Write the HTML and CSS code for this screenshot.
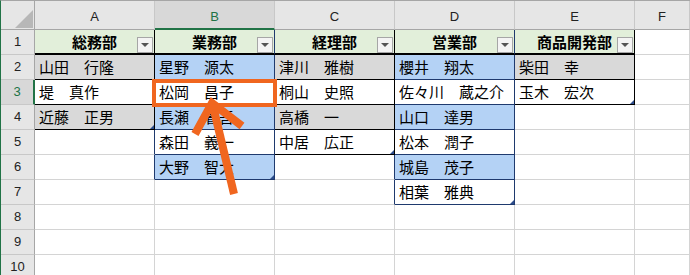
FILE: index.html
```html
<!DOCTYPE html>
<html>
<head>
    <title>Sheet</title>
    <link rel="stylesheet" href="styles.css">
</head>
<body>
    <div class="sheet">
        <div class="corner"><span class="corner-mark"></span></div>
        <div class="col-head">A</div>
        <div class="col-head selected">B</div>
        <div class="col-head">C</div>
        <div class="col-head">D</div>
        <div class="col-head">E</div>
        <div class="col-head">F</div>

        <div class="row-head">1</div>
        <div class="cell head t-black">総務部<span class="filter"></span></div>
        <div class="cell head t-navy">業務部<span class="filter"></span></div>
        <div class="cell head t-black">経理部<span class="filter"></span></div>
        <div class="cell head t-navy">営業部<span class="filter"></span></div>
        <div class="cell head t-black">商品開発部<span class="filter"></span></div>
        <div class="cell"></div>

        <div class="row-head">2</div>
        <div class="cell t-black gray">山田　行隆</div>
        <div class="cell t-navy blue">星野　源太</div>
        <div class="cell t-black gray">津川　雅樹</div>
        <div class="cell t-navy blue">櫻井　翔太</div>
        <div class="cell t-black gray">柴田　幸</div>
        <div class="cell"></div>

        <div class="row-head selected">3</div>
        <div class="cell t-black">堤　真作</div>
        <div class="cell t-navy">松岡　昌子</div>
        <div class="cell t-black">桐山　史照</div>
        <div class="cell t-navy">佐々川　蔵之介</div>
        <div class="cell t-black end">玉木　宏次</div>
        <div class="cell"></div>

        <div class="row-head">4</div>
        <div class="cell t-black gray end">近藤　正男</div>
        <div class="cell t-navy blue">長瀬　省吾</div>
        <div class="cell t-black gray">高橋　一</div>
        <div class="cell t-navy blue">山口　達男</div>
        <div class="cell"></div>
        <div class="cell"></div>

        <div class="row-head">5</div>
        <div class="cell edge-navy"></div>
        <div class="cell t-navy">森田　義一</div>
        <div class="cell t-black end">中居　広正</div>
        <div class="cell t-navy">松本　潤子</div>
        <div class="cell"></div>
        <div class="cell"></div>

        <div class="row-head">6</div>
        <div class="cell edge-navy"></div>
        <div class="cell t-navy blue end">大野　智大</div>
        <div class="cell edge-navy"></div>
        <div class="cell t-navy blue">城島　茂子</div>
        <div class="cell"></div>
        <div class="cell"></div>

        <div class="row-head">7</div>
        <div class="cell"></div>
        <div class="cell"></div>
        <div class="cell edge-navy"></div>
        <div class="cell t-navy end">相葉　雅典</div>
        <div class="cell"></div>
        <div class="cell"></div>

        <div class="row-head">8</div>
        <div class="cell"></div>
        <div class="cell"></div>
        <div class="cell"></div>
        <div class="cell"></div>
        <div class="cell"></div>
        <div class="cell"></div>

        <div class="row-head">9</div>
        <div class="cell"></div>
        <div class="cell"></div>
        <div class="cell"></div>
        <div class="cell"></div>
        <div class="cell"></div>
        <div class="cell"></div>

        <div class="row-head">10</div>
        <div class="cell"></div>
        <div class="cell"></div>
        <div class="cell"></div>
        <div class="cell"></div>
        <div class="cell"></div>
        <div class="cell"></div>
    </div>

    <!-- callout drawn over the sheet -->
    <svg class="overlay" width="690" height="275" viewBox="0 0 690 275">
        <rect x="154" y="81" width="121" height="24" fill="none" stroke="#f0661f" stroke-width="4"/>
        <line x1="234" y1="194" x2="213" y2="106" stroke="#f0661f" stroke-width="8"/>
        <polyline points="195,134 212,103 242,126" fill="none" stroke="#f0661f" stroke-width="8" stroke-linejoin="miter"/>
    </svg>
</body>
</html>
```

FILE: styles.css
```css
body {
    margin: 0;
    width: 690px;
    height: 275px;
    overflow: hidden;
    position: relative;
    background-color: #ffffff;
}

.sheet {
    display: grid;
    grid-template-columns: 34px repeat(5, 120px) 1fr;
    grid-template-rows: 29px repeat(10, 25px);
    border-left: 1px solid #217346;
    border-top: 1px solid #a6a6a6;
}

.sheet > div {
    box-sizing: border-box;
}

/* headers */
.corner {
    display: flex;
    justify-content: flex-end;
    align-items: flex-end;
    padding: 0 1px 1px 0;
    background-color: #e6e6e6;
    border-right: 1px solid #a6a6a6;
    border-bottom: 1px solid #a6a6a6;
}

.corner-mark {
    width: 18px;
    height: 18px;
    background-color: #b7b7b7;
    clip-path: polygon(100% 0, 100% 100%, 0 100%);
}

.col-head {
    background-color: #e6e6e6;
    border-right: 1px solid #c8c8c8;
    border-bottom: 1px solid #a6a6a6;
    text-align: center;
    padding-top: 4px;
    font: 13px/24px "Liberation Sans", Arial, sans-serif;
    color: #222222;
}

.col-head.selected {
    background-color: #d8d8d8;
    color: #217346;
    border-bottom: 2px solid #217346;
}

.row-head {
    background-color: #e6e6e6;
    border-right: 1px solid #a6a6a6;
    border-bottom: 1px solid #c8c8c8;
    text-align: center;
    font: 13px/24px "Liberation Sans", Arial, sans-serif;
    color: #222222;
}

.row-head.selected {
    background-color: #d8d8d8;
    color: #217346;
    border-right: 2px solid #217346;
}

/* cells */
.cell {
    position: relative;
    border-right: 1px solid #d4d4d4;
    border-bottom: 1px solid #d4d4d4;
    padding-left: 4px;
    font: 15px/24px "Noto Sans CJK JP", sans-serif;
    color: #000000;
    white-space: nowrap;
    overflow: visible;
}

.t-black {
    border-right-color: #000000;
    border-bottom-color: #000000;
}

.t-navy {
    border-right-color: #1f3a6e;
    border-bottom-color: #1f3a6e;
}

.edge-navy {
    border-right-color: #1f3a6e;
}

.cell.head {
    background-color: #e2efda;
    border-bottom: 2px solid #000000;
    font-weight: bold;
    text-align: center;
    padding-left: 0;
    line-height: 23px;
}

.gray {
    background-color: #d9d9d9;
}

.blue {
    background-color: #b4d2f5;
}

.end::after {
    content: "";
    position: absolute;
    right: 0;
    bottom: 0;
    border-left: 4px solid transparent;
    border-bottom: 4px solid #2b4c8c;
}

/* autofilter button */
.filter {
    position: absolute;
    right: 1px;
    bottom: 0;
    width: 16px;
    height: 16px;
    box-sizing: border-box;
    border: 1px solid #a6a6a6;
    background-color: #f4f4f4;
    display: flex;
    justify-content: center;
    align-items: center;
}

.filter::after {
    content: "";
    border-left: 4px solid transparent;
    border-right: 4px solid transparent;
    border-top: 4px solid #555555;
}

.overlay {
    position: absolute;
    top: 0;
    left: 0;
    pointer-events: none;
}
```
